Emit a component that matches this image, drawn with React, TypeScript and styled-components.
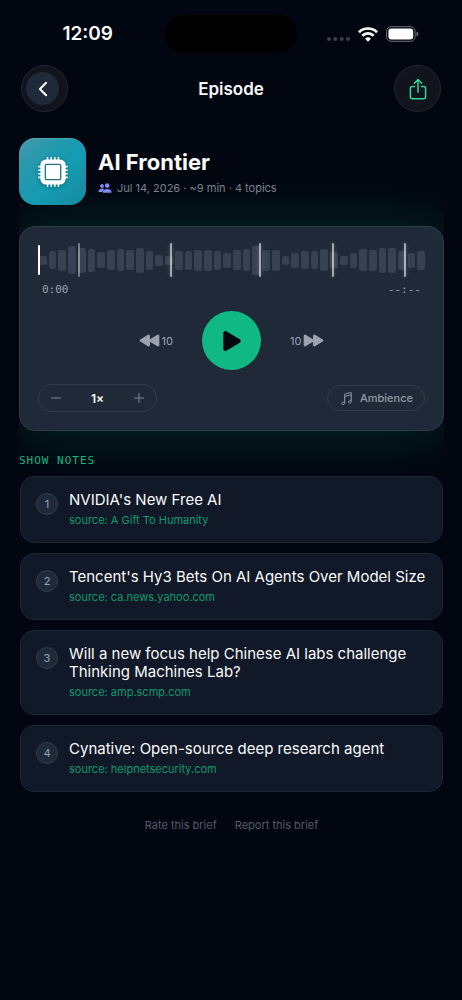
import React from "react";
import styled, { createGlobalStyle } from "styled-components";
import {
  IoAdd,
  IoChevronBack,
  IoMusicalNotesOutline,
  IoPeople,
  IoPlay,
  IoPlayBack,
  IoPlayForward,
  IoRemove,
} from "react-icons/io5";

const sans = `Inter, "Liberation Sans", sans-serif`;
const mono = `"DejaVu Sans Mono", "Liberation Mono", monospace`;

const GlobalStyle = createGlobalStyle`
  *, *::before, *::after { box-sizing: border-box; }
  html { background: #020610; }
  body { margin: 0; background: #020610; color: #f9fafb; font-family: ${sans}; }
  button { font: inherit; color: inherit; background: none; border: 0; padding: 0; cursor: pointer; }
  a { color: inherit; text-decoration: none; }
  h1, h2, h3, p, ol { margin: 0; padding: 0; }
  svg { display: block; flex: none; }
`;

const Screen = styled.div`
  min-height: 100vh;
  display: flex;
  flex-direction: column;
`;

const StatusBar = styled.div`
  display: grid;
  grid-template-columns: 1fr 132px 1fr;
  align-items: center;
  padding-top: 15px;
`;

const Clock = styled.time`
  justify-self: end;
  padding-right: 52px;
  font-size: 19px;
  line-height: 24px;
  font-weight: 600;
`;

const Island = styled.div`
  height: 38px;
  border-radius: 19px;
  background: #000;
`;

const Signals = styled.div`
  display: flex;
  align-items: center;
  gap: 8px;
  padding-left: 30px;
`;

const Header = styled.header`
  display: grid;
  grid-template-columns: 1fr auto 1fr;
  align-items: center;
  padding: 12px 21px 0;
`;

const ScreenTitle = styled.h1`
  font-size: 17px;
  line-height: 24px;
  font-weight: 600;
`;

const RoundButton = styled.button<{ $end?: boolean }>`
  width: 47px;
  height: 47px;
  display: grid;
  place-items: center;
  justify-self: ${(p) => (p.$end ? "end" : "start")};
  padding-right: ${(p) => (p.$end ? 0 : 4)}px;
  border: 1px solid #242835;
  border-radius: 50%;
  background: #11141c;
  color: ${(p) => (p.$end ? "#34d399" : "#f9fafb")};
`;

const BackDisc = styled.span`
  width: 33px;
  height: 33px;
  display: grid;
  place-items: center;
  border-radius: 50%;
  background: #1f2937;
`;

const Content = styled.main`
  flex: 1;
  margin: 0 18px 0 19px;
  padding-top: 26px;
  overflow-x: clip;
`;

const Show = styled.section`
  display: flex;
  align-items: center;
  gap: 12px;
`;

const Artwork = styled.div`
  width: 67px;
  height: 67px;
  display: grid;
  place-items: center;
  border-radius: 16px;
  background: linear-gradient(135deg, #4599a9 0%, #2199ae 35%, #149bb2 60%, #17899d 100%);
  box-shadow: inset 0 1px 0 rgba(255, 255, 255, 0.15);
  svg { filter: drop-shadow(0 1px 2px rgba(0, 0, 0, 0.3)); }
`;

const ShowName = styled.h2`
  font-size: 22px;
  line-height: 28px;
  font-weight: 700;
`;

const Meta = styled.p`
  display: flex;
  align-items: center;
  gap: 5px;
  margin-top: 5px;
  font-size: 11px;
  line-height: 14px;
  color: #7c818e;
  svg { color: #818cf8; }
`;

const Player = styled.section`
  margin-top: 21px;
  padding: 16px 18px 18px;
  border: 1px solid #303b49;
  border-radius: 16px;
  background: #1f2937;
  box-shadow: 0 0 56px rgba(16, 185, 129, 0.22);
`;

const Wave = styled.div`
  position: relative;
  display: flex;
  align-items: center;
  gap: 2px;
  height: 34px;
  padding-left: 1px;
`;

const Bar = styled.span`
  flex: 1;
  border-radius: 2px;
  background: #374151;
`;

const Playhead = styled.span`
  position: absolute;
  left: 0;
  top: 2px;
  width: 2px;
  height: 30px;
  border-radius: 1px;
  background: #fff;
`;

const Chapter = styled.span<{ $faint?: boolean }>`
  position: absolute;
  top: 0;
  width: 2px;
  height: 34px;
  border-radius: 1px;
  background: rgba(255, 255, 255, ${(p) => (p.$faint ? 0.4 : 0.6)});
  box-shadow: 0 0 4px rgba(255, 255, 255, ${(p) => (p.$faint ? 0 : 0.25)});
`;

const Times = styled.div`
  display: flex;
  justify-content: space-between;
  margin-top: 5px;
  padding: 0 4px;
  font-family: ${mono};
  font-size: 11px;
  line-height: 16px;
  color: #9ca3af;
`;

const Transport = styled.div`
  display: flex;
  align-items: center;
  justify-content: center;
  gap: 29px;
  margin-top: 13px;
`;

const SkipButton = styled.button`
  display: flex;
  align-items: center;
  gap: 2px;
  font-size: 11px;
  line-height: 16px;
  color: #9ca3af;
`;

const PlayButton = styled.button`
  width: 59px;
  height: 59px;
  display: grid;
  place-items: center;
  border-radius: 50%;
  background: #10b981;
  color: #030712;
`;

const Options = styled.div`
  display: flex;
  align-items: center;
  justify-content: space-between;
  margin-top: 14px;
`;

const Speed = styled.div`
  width: 119px;
  height: 28px;
  display: flex;
  align-items: center;
  justify-content: space-between;
  padding: 0 9px;
  border: 1px solid #323d4b;
  border-radius: 14px;
  font-size: 12px;
  font-weight: 600;
  button { color: #7f8794; }
`;

const Ambience = styled.button`
  height: 26px;
  display: flex;
  align-items: center;
  gap: 6px;
  padding: 0 11px;
  border: 1px solid #323d4b;
  border-radius: 13px;
  font-size: 11px;
  font-weight: 500;
  color: #949ba7;
`;

const SectionLabel = styled.h2`
  margin-top: 22px;
  font-family: ${mono};
  font-size: 11px;
  line-height: 16px;
  font-weight: 400;
  letter-spacing: 1px;
  color: #10b981;
`;

const Notes = styled.ol`
  display: grid;
  gap: 10px;
  margin-top: 7px;
  padding: 0 1px;
  list-style: none;
`;

const Note = styled.li`
  position: relative;
  display: flex;
  align-items: flex-start;
  gap: 11px;
  padding: 14px 15px;
  border: 1px solid #1f2734;
  border-radius: 14px;
  background: #111827;
`;

const NoteNumber = styled.span`
  flex: none;
  width: 22px;
  height: 22px;
  margin-top: 2px;
  border: 1px solid #323c4a;
  border-radius: 50%;
  background: #1f2937;
  font-size: 11px;
  line-height: 20px;
  text-align: center;
  color: #9ca3af;
`;

const NoteTitle = styled.h3`
  font-size: 15px;
  line-height: 18px;
  font-weight: 400;
`;

const Source = styled.a`
  display: block;
  margin-top: 3px;
  font-size: 11px;
  line-height: 16px;
  color: #109a70;
`;

const Footer = styled.footer`
  display: flex;
  justify-content: center;
  gap: 18px;
  margin-top: 25px;
  font-size: 11px;
  line-height: 16px;
  color: #555b68;
`;

const levels = [
  9, 18, 21, 28, 25, 23, 16, 20, 22, 20, 25, 19, 11, 9, 19, 19, 21, 21, 19, 15,
  20, 22, 29, 21, 21, 9, 15, 18, 18, 22, 16, 9, 15, 22, 21, 25, 25, 19, 15, 19,
];

const chapters = [
  { at: 10.4, faint: true },
  { at: 34.2 },
  { at: 57 },
  { at: 75.9 },
  { at: 94.6 },
];

const notes = [
  { title: "NVIDIA's New Free AI", source: "A Gift To Humanity" },
  { title: "Tencent's Hy3 Bets On AI Agents Over Model Size", source: "ca.news.yahoo.com" },
  { title: "Will a new focus help Chinese AI labs challenge Thinking Machines Lab?", source: "amp.scmp.com" },
  { title: "Cynative: Open-source deep research agent", source: "helpnetsecurity.com" },
];

const CellularDots = () => (
  <svg width="23" height="16" viewBox="0 0 23 16" fill="#3d404b">
    <circle cx="2" cy="13" r="2" />
    <circle cx="8.3" cy="13" r="2" />
    <circle cx="14.7" cy="13" r="2" />
    <circle cx="21" cy="13" r="2" />
  </svg>
);

const Wifi = () => (
  <svg width="20" height="15" viewBox="0 0 20 15" fill="none" stroke="#fff" strokeWidth="2.7">
    <path d="M1 5.2a12.8 12.8 0 0 1 18 0" />
    <path d="M4.3 8.8a8.1 8.1 0 0 1 11.4 0" />
    <path d="M10 14.8l-2.9-3a4.1 4.1 0 0 1 5.8 0z" fill="#fff" stroke="none" />
  </svg>
);

const Battery = () => (
  <svg width="33" height="16" viewBox="0 0 33 16">
    <rect x=".5" y=".7" width="28.6" height="14.6" rx="4.6" fill="none" stroke="#6f727b" />
    <rect x="2.4" y="2.6" width="24.8" height="10.8" rx="3" fill="#fff" />
    <path d="M30.5 5.6c1.1.4 1.8 1.3 1.8 2.4s-.7 2-1.8 2.4z" fill="#6f727b" />
  </svg>
);

const ShareIcon = () => (
  <svg
    width="18"
    height="22"
    viewBox="0 0 18 22"
    fill="none"
    stroke="currentColor"
    strokeWidth="1.5"
    strokeLinecap="round"
    strokeLinejoin="round"
  >
    <path d="M5.6 8.6H3.4a2 2 0 0 0-2 2v8.2a2 2 0 0 0 2 2h11.2a2 2 0 0 0 2-2v-8.2a2 2 0 0 0-2-2h-2.2" />
    <path d="M9 14.2V1.6M5.4 5.2 9 1.6l3.6 3.6" />
  </svg>
);

const ChipIcon = () => (
  <svg width="30" height="30" viewBox="0 0 30 30">
    <path
      d="M9.6.8v3M13.2.8v3M16.8.8v3M20.4.8v3M9.6 26.2v3M13.2 26.2v3M16.8 26.2v3M20.4 26.2v3M.8 9.6h3M.8 13.2h3M.8 16.8h3M.8 20.4h3M26.2 9.6h3M26.2 13.2h3M26.2 16.8h3M26.2 20.4h3"
      stroke="#fff"
      strokeWidth="1.6"
      strokeLinecap="round"
    />
    <rect x="2.4" y="2.4" width="25.2" height="25.2" rx="5.6" fill="#fff" />
    <rect x="7.3" y="7.3" width="15.4" height="15.4" rx="1.2" fill="none" stroke="#1c7484" strokeWidth="1.3" />
  </svg>
);

export default function App() {
  return (
    <Screen>
      <GlobalStyle />
      <StatusBar>
        <Clock>12:09</Clock>
        <Island />
        <Signals>
          <CellularDots />
          <Wifi />
          <Battery />
        </Signals>
      </StatusBar>

      <Header>
        <RoundButton aria-label="Back">
          <BackDisc>
            <IoChevronBack size={22} />
          </BackDisc>
        </RoundButton>
        <ScreenTitle>Episode</ScreenTitle>
        <RoundButton $end aria-label="Share">
          <ShareIcon />
        </RoundButton>
      </Header>

      <Content>
        <Show>
          <Artwork>
            <ChipIcon />
          </Artwork>
          <div>
            <ShowName>AI Frontier</ShowName>
            <Meta>
              <IoPeople size={14} />
              Jul 14, 2026 · ~9 min · 4 topics
            </Meta>
          </div>
        </Show>

        <Player aria-label="Player">
          <Wave>
            {levels.map((height, i) => (
              <Bar key={i} style={{ height }} />
            ))}
            {chapters.map((c) => (
              <Chapter key={c.at} $faint={c.faint} style={{ left: `${c.at}%` }} />
            ))}
            <Playhead />
          </Wave>
          <Times>
            <span>0:00</span>
            <span>--:--</span>
          </Times>
          <Transport>
            <SkipButton aria-label="Back 10 seconds">
              <IoPlayBack size={21} />
              10
            </SkipButton>
            <PlayButton aria-label="Play">
              <IoPlay size={28} />
            </PlayButton>
            <SkipButton aria-label="Forward 10 seconds">
              10
              <IoPlayForward size={21} />
            </SkipButton>
          </Transport>
          <Options>
            <Speed>
              <button aria-label="Slower">
                <IoRemove size={16} />
              </button>
              <span>1×</span>
              <button aria-label="Faster">
                <IoAdd size={16} />
              </button>
            </Speed>
            <Ambience>
              <IoMusicalNotesOutline size={15} />
              Ambience
            </Ambience>
          </Options>
        </Player>

        <SectionLabel>SHOW NOTES</SectionLabel>
        <Notes>
          {notes.map((note, i) => (
            <Note key={note.title}>
              <NoteNumber>{i + 1}</NoteNumber>
              <div>
                <NoteTitle>{note.title}</NoteTitle>
                <Source href="#">source: {note.source}</Source>
              </div>
            </Note>
          ))}
        </Notes>

        <Footer>
          <a href="#">Rate this brief</a>
          <a href="#">Report this brief</a>
        </Footer>
      </Content>
    </Screen>
  );
}
